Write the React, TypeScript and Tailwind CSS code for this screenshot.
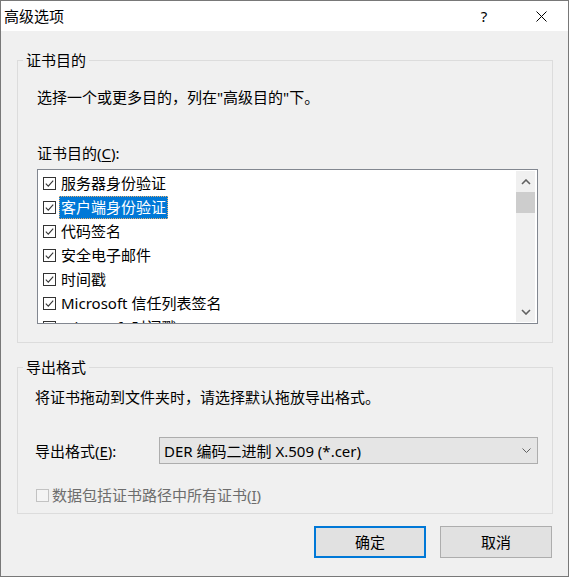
import React from 'react';

const purposes = [
  '服务器身份验证',
  '客户端身份验证',
  '代码签名',
  '安全电子邮件',
  '时间戳',
  'Microsoft 信任列表签名',
  'Microsoft 时间戳',
];

const CheckBox: React.FC<{ checked?: boolean; disabled?: boolean }> = ({ checked, disabled }) => (
  <svg width="13" height="13" viewBox="0 0 13 13" className="shrink-0">
    <rect x="0.5" y="0.5" width="12" height="12" fill={disabled ? '#f4f4f4' : '#fff'} stroke={disabled ? '#c2c2c2' : '#333'} />
    {checked && <path d="M2.8 6.6 L5.3 9.1 L10.2 3.6" fill="none" stroke="#333" strokeWidth="1.1" />}
  </svg>
);

const Chevron: React.FC<{ up?: boolean }> = ({ up }) => (
  <svg width="10" height="6" viewBox="0 0 10 6">
    <path d={up ? 'M1 5 L5 1 L9 5' : 'M1 1 L5 5 L9 1'} fill="none" stroke="#606060" strokeWidth="1.6" />
  </svg>
);

export default function App() {
  return (
    <div className="w-[569px] h-[577px] border border-[#787878] bg-[#f0f0f0] flex flex-col text-[15px] text-black font-['Noto_Sans','Noto_Sans_CJK_SC',sans-serif] leading-[20px] overflow-hidden">
      {/* 标题栏 */}
      <div className="h-[30px] bg-white flex items-center shrink-0">
        <span className="ml-[3px]">高级选项</span>
        <span className="ml-auto w-[20px] text-center">?</span>
        <span className="ml-[37px] w-[20px] flex justify-center">
          <svg width="11" height="11" viewBox="0 0 11 11">
            <path d="M0.5 0.5 L10.5 10.5 M10.5 0.5 L0.5 10.5" stroke="#000" strokeWidth="1" />
          </svg>
        </span>
        <span className="w-[17px]" />
      </div>

      {/* 证书目的 */}
      <fieldset className="ml-[16px] mt-[19px] w-[536px] border border-[#dcdcdc] p-0">
        <legend className="ml-[5px] px-[3px] leading-[20px]">证书目的</legend>
        <p className="ml-[19px] mt-[17px]">选择一个或更多目的，列在"高级目的"下。</p>
        <p className="ml-[19px] mt-[36px]">
          证书目的(<span className="underline underline-offset-2">C</span>):
        </p>
        <div className="ml-[19px] mt-[6px] mb-[18px] w-[501px] h-[155px] border border-[#828790] bg-white flex">
          <div className="flex-1 overflow-hidden pt-[1px]">
            {purposes.map((p, i) => (
              <div key={p} className="h-[24px] flex items-center">
                <span className="ml-[5px]">
                  <CheckBox checked />
                </span>
                <span
                  className={`ml-[3px] px-[2px] h-[23px] leading-[23px] whitespace-nowrap ${
                    i === 1 ? 'bg-[#0078d7] text-white outline outline-1 outline-dotted outline-[#e8b070] -outline-offset-1' : ''
                  }`}
                >
                  {p}
                </span>
              </div>
            ))}
          </div>
          <div className="w-[19px] my-[1px] mr-[2px] bg-[#f0f0f0] flex flex-col">
            <div className="h-[21px] flex items-center justify-center">
              <Chevron up />
            </div>
            <div className="h-[21px] bg-[#cdcdcd]" />
            <div className="flex-1" />
            <div className="h-[21px] flex items-center justify-center">
              <Chevron />
            </div>
          </div>
        </div>
      </fieldset>

      {/* 导出格式 */}
      <fieldset className="ml-[16px] mt-[14px] w-[536px] border border-[#dcdcdc] p-0">
        <legend className="ml-[5px] px-[3px] leading-[20px]">导出格式</legend>
        <p className="ml-[17px] mt-[10px]">将证书拖动到文件夹时，请选择默认拖放导出格式。</p>
        <div className="mt-[30px] flex items-center">
          <span className="ml-[17px] w-[124px]">
            导出格式(<span className="underline underline-offset-2">E</span>):
          </span>
          <div className="w-[379px] h-[27px] border border-[#adadad] bg-[#e5e5e5] flex items-center pl-[4px] pr-[6px]">
            <span className="flex-1">DER 编码二进制 X.509 (*.cer)</span>
            <svg width="9" height="5" viewBox="0 0 9 5">
              <path d="M0.5 0.5 L4.5 4.5 L8.5 0.5" fill="none" stroke="#606060" strokeWidth="1" />
            </svg>
          </div>
        </div>
        <div className="mt-[21px] mb-[8px] flex items-center text-[#6d6d6d]">
          <span className="ml-[18px]">
            <CheckBox disabled />
          </span>
          <span className="ml-[3px]">
            数据包括证书路径中所有证书(<span className="underline underline-offset-2">I</span>)
          </span>
        </div>
      </fieldset>

      {/* 按钮 */}
      <div className="mt-[12px] flex justify-end gap-[14px] pr-[16px]">
        <button className="w-[112px] h-[32px] border-2 border-[#0078d7] bg-[#e1e1e1]">确定</button>
        <button className="w-[112px] h-[32px] border border-[#adadad] bg-[#e1e1e1]">取消</button>
      </div>
    </div>
  );
}
